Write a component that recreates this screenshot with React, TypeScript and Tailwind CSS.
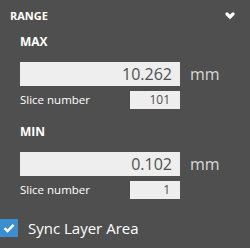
import React from "react";

function Chevron() {
  return (
    <svg width="10" height="8" viewBox="0 0 10 8" className="block">
      <path d="M2 2 L5 5 L8 2" stroke="white" strokeWidth="3.2" strokeLinecap="round" strokeLinejoin="miter" fill="none" />
    </svg>
  );
}

function Section({ title, value, slice }: { title: string; value: string; slice: string }) {
  return (
    <div className="pl-[20px]">
      <div className="text-[12px] font-bold text-white leading-[16px]">{title}</div>
      <div className="flex items-center mt-[12px]">
        <div className="w-[160px] h-[24px] bg-[#eeeeee] text-right pr-[8px] text-[16px] leading-[24px] text-[#505050]">
          {value}
        </div>
        <div className="ml-[10px] text-[16px] text-[#d8d8d8] leading-[24px]">mm</div>
      </div>
      <div className="flex items-center mt-[5px]">
        <div className="w-[110px] text-[11.5px] text-white leading-[18px]">Slice number</div>
        <div className="w-[50px] h-[18px] bg-[#eeeeee] text-right pr-[10px] text-[12px] leading-[18px] text-[#505050]">
          {slice}
        </div>
      </div>
    </div>
  );
}

export default function App() {
  return (
    <div className="w-[250px] h-[248px] bg-[#4f4f4f] font-['Open_Sans',sans-serif] overflow-hidden">
      <div className="flex items-center justify-between pl-[10px] pr-[15px] pt-[8px] h-[24px]">
        <div className="text-[11px] font-bold text-white leading-[16px]">RANGE</div>
        <Chevron />
      </div>
      <div className="mt-[10px]">
        <Section title="MAX" value="10.262" slice="101" />
      </div>
      <div className="mt-[15px]">
        <Section title="MIN" value="0.102" slice="1" />
      </div>
      <div className="flex items-center mt-[20px]">
        <div className="w-[18px] h-[18px] bg-[#3b8fd0] flex items-center justify-center">
          <svg width="12" height="10" viewBox="0 0 12 10">
            <path d="M1.5 5.2 L4.5 8 L10.5 1.8" stroke="white" strokeWidth="2.4" fill="none" />
          </svg>
        </div>
        <div className="ml-[10px] text-[15px] text-white leading-[18px]">Sync Layer Area</div>
      </div>
    </div>
  );
}
